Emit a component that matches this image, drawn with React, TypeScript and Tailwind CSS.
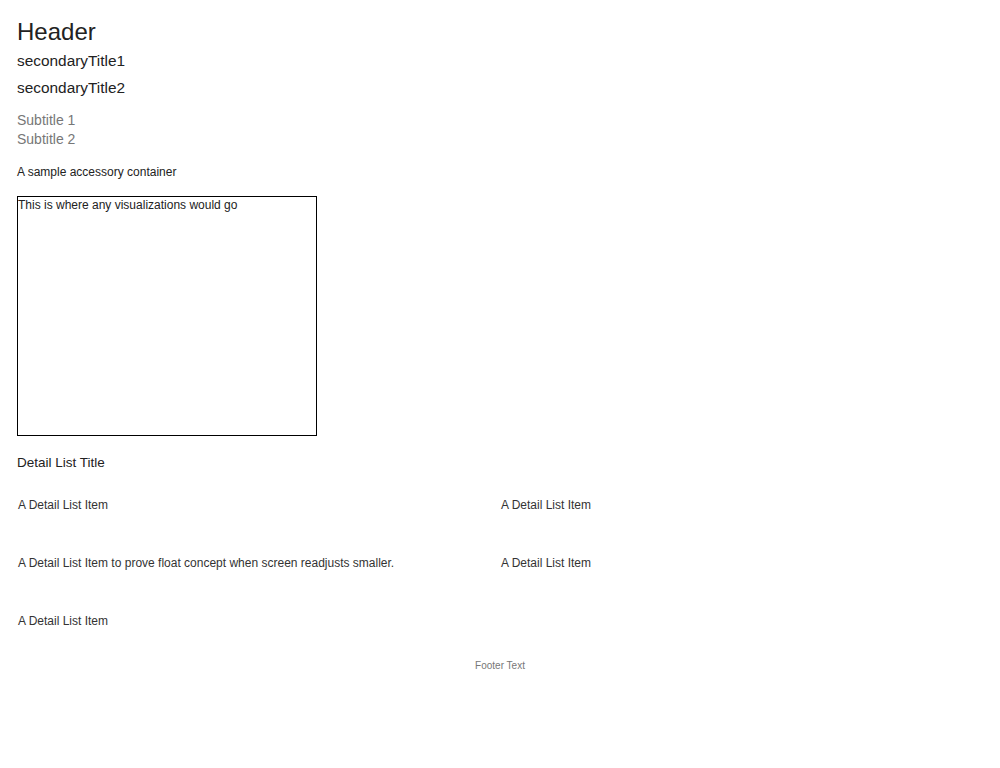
import React from "react";

export default function App() {
  const items = [
    "A Detail List Item",
    "A Detail List Item",
    "A Detail List Item to prove float concept when screen readjusts smaller.",
    "A Detail List Item",
    "A Detail List Item",
  ];
  return (
    <div
      className="min-h-[768px] w-[1000px] bg-white px-[17px] pt-[18px] text-[#222]"
      style={{ fontFamily: '"Liberation Sans", Arial, sans-serif' }}
    >
      <div className="text-[24px] leading-[28px] text-[#222]">Header</div>
      <div className="mt-[1px] text-[15.4px] leading-[27px] text-[#222]">secondaryTitle1</div>
      <div className="text-[15.4px] leading-[27px] text-[#222]">secondaryTitle2</div>
      <div className="mt-[10px] text-[14px] leading-[19px] text-[#777]">Subtitle 1</div>
      <div className="text-[14px] leading-[19px] text-[#777]">Subtitle 2</div>
      <div className="mt-[16px] text-[12px] leading-[14px] text-[#222]">A sample accessory container</div>
      <div className="mt-[17px] h-[240px] w-[300px] border border-black pt-[1px] text-[12px] leading-[14px] text-[#222]">
        This is where any visualizations would go
      </div>
      <div className="mt-[19px] text-[13.5px] leading-[16px] text-[#222]">Detail List Title</div>
      <div className="mt-[27px] grid grid-cols-2 gap-y-[44px]">
        {items.map((t, i) => (
          <div key={i} className="pl-[1px] text-[12px] leading-[14px] text-[#333]">
            {t}
          </div>
        ))}
      </div>
      <div className="mt-[32px] text-center text-[10px] leading-[12px] text-[#777]">Footer Text</div>
    </div>
  );
}
